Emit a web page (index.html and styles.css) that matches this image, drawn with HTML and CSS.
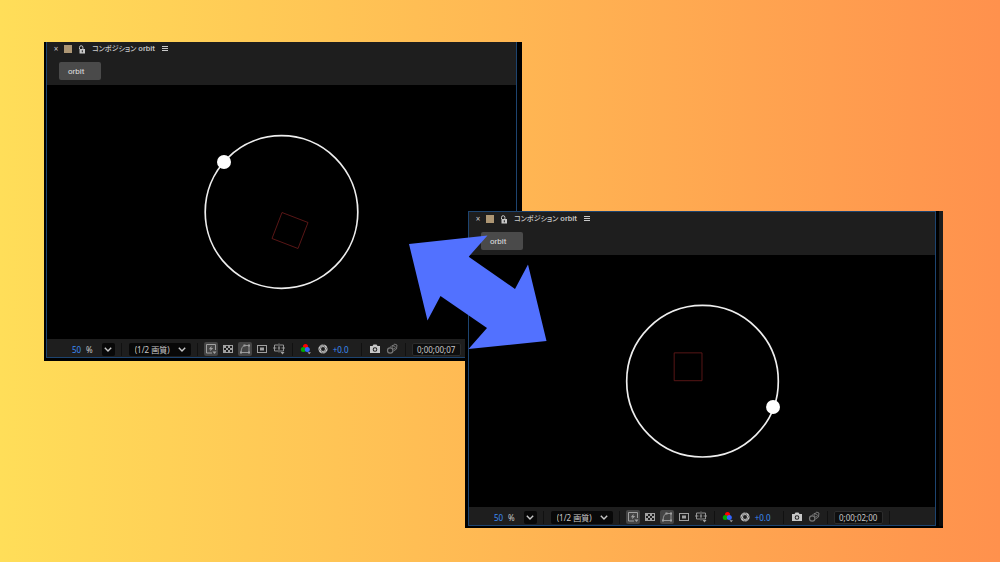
FILE: index.html
```html
<!DOCTYPE html>
<html lang="ja">
<head>
  <meta charset="UTF-8">
  <meta name="viewport" content="width=device-width, initial-scale=1.0">
  <title>orbit</title>
  <link rel="stylesheet" href="styles.css">
</head>
<body>
  <!-- Icons -->
  <svg class="icon-defs" aria-hidden="true">
    <symbol id="i-lock" viewBox="0 0 8 9">
      <path d="M1.5 4V2.400a1.700 1.700 0 0 1 3.400 0v1.600" fill="none" stroke="currentColor" stroke-width="1"/>
      <path d="M1.500 4h5.500v4.500H1.500zM3.800 5.200v2h1v-2z" fill="currentColor" fill-rule="evenodd"/>
    </symbol>
    <symbol id="i-menu" viewBox="0 0 6 6">
      <path d="M0 0h6v1H0zM0 2h6v1H0zM0 4h6v1H0z" fill="currentColor" shape-rendering="crispEdges"/>
    </symbol>
    <symbol id="i-chevron" viewBox="0 0 8 5">
      <path d="M0.8 0.8L4 4l3.2-3.2" fill="none" stroke="currentColor" stroke-width="1.4"/>
    </symbol>
    <symbol id="i-preview" viewBox="0 0 12 12">
      <path d="M10.500 7V1.500H1.500v8.500H7" fill="none" stroke="currentColor"/>
      <path d="M6.600 2.800L3.800 6.200h1.800L5 8.500l3.200-3.500H6.300z" fill="currentColor"/>
      <path d="M7.500 8.500h4L9.500 11z" fill="currentColor"/>
    </symbol>
    <symbol id="i-grid" viewBox="0 0 12 12">
      <rect x="1.500" y="2.500" width="9" height="7" fill="none" stroke="currentColor"/>
      <path d="M2 3h2v2H2zM6 3h2v2H6zM4 5h2v2H4zM8 5h2v2H8zM2 7h2v2H2zM6 7h2v2H6z" fill="currentColor"/>
    </symbol>
    <symbol id="i-mask" viewBox="0 0 12 12">
      <path d="M2 9.500C2.200 5.500 3.500 3 5.500 2.500H10v7z" fill="none" stroke="currentColor" stroke-width="0.9"/>
      <path d="M1 8.500h2v2H1zM4.500 1.500h2v2h-2zM9 1.500h2v2H9zM9 8.500h2v2H9z" fill="currentColor"/>
    </symbol>
    <symbol id="i-region" viewBox="0 0 12 12">
      <rect x="1.500" y="2.500" width="9" height="7" fill="none" stroke="currentColor"/>
      <rect x="4" y="4.500" width="4" height="3" fill="currentColor"/>
    </symbol>
    <symbol id="i-guides" viewBox="0 0 12 12">
      <path d="M5 2H1.500v6H5M7 2h3.500v6H7M6 0.500v9M0 5h3.500M4.800 5h2.400M8.500 5H12" fill="none" stroke="currentColor" stroke-width="0.9"/>
      <path d="M7.500 9h4L9.500 11.500z" fill="currentColor"/>
    </symbol>
    <symbol id="i-rgb" viewBox="0 0 12 12">
      <circle cx="5.500" cy="3.500" r="2.500" fill="#f00"/>
      <circle cx="3.300" cy="6.500" r="2.500" fill="#0a0"/>
      <circle cx="7.300" cy="6.500" r="2.500" fill="#36f"/>
      <path d="M7.500 9.200h3.500L9.200 11.300z" fill="currentColor"/>
    </symbol>
    <symbol id="i-shutter" viewBox="0 0 12 12">
      <circle cx="6" cy="6" r="3.300" fill="none" stroke="currentColor" stroke-width="2.600"/>
      <path d="M6 1L8.500 5M10.500 4L8 8M10 9H5.500M6 11L3.500 7M1.500 8L4 4M2 3h4.500" stroke="#1e1e1e" stroke-width="0.500"/>
    </symbol>
    <symbol id="i-camera" viewBox="0 0 12 12">
      <path d="M1 3h2.500l1-1.500h3l1 1.500H11v7H1zM6 4.200a2.300 2.300 0 1 0 0 4.600a2.300 2.300 0 1 0 0-4.600z" fill="currentColor" fill-rule="evenodd"/>
      <circle cx="6" cy="6.500" r="1.300" fill="currentColor"/>
    </symbol>
    <symbol id="i-snapshot" viewBox="0 0 12 12">
      <path d="M4 4.500L6 2.500l1.500 0L8.500 1l2.500 1L10.500 6 7.500 8" fill="none" stroke="currentColor"/>
      <circle cx="4.200" cy="7.500" r="2.700" fill="none" stroke="currentColor" stroke-width="1.200"/>
      <circle cx="7.800" cy="4.500" r="1.500" fill="none" stroke="currentColor"/>
    </symbol>
  </svg>

  <main class="desktop">
    <section class="window window-start">
      <div class="panel">
        <header class="panel-header">
          <div class="panel-title">
            <button class="close" aria-label="閉じる">×</button>
            <span class="swatch"></span>
            <svg class="lock"><use href="#i-lock"/></svg>
            <h2><span class="kana">コンポジション</span> orbit</h2>
            <button class="menu" aria-label="メニュー"><svg><use href="#i-menu"/></svg></button>
          </div>
          <button class="comp-tab">orbit</button>
        </header>
        <svg class="stage" viewBox="0 0 469 254">
          <circle class="orbit" cx="234.500" cy="127" r="76.300"/>
          <path class="square" d="M235 127.500l26 10-10 26-26-10z"/>
          <circle class="planet" cx="177" cy="77" r="7"/>
        </svg>
        <footer class="toolbar">
          <div class="zoom">
            <input class="zoom-value" type="text" value="50" aria-label="拡大率"><span>%</span>
            <button class="drop" aria-label="拡大率を選択"><svg class="chevron"><use href="#i-chevron"/></svg></button>
          </div>
          <div class="quality">
            <select aria-label="解像度"><option>(1/2 画質)</option></select>
            <svg class="chevron"><use href="#i-chevron"/></svg>
          </div>
          <div class="view-tools">
            <button class="tool active" aria-label="高速プレビュー"><svg><use href="#i-preview"/></svg></button>
            <button class="tool" aria-label="透明グリッド"><svg><use href="#i-grid"/></svg></button>
            <button class="tool active" aria-label="マスク"><svg><use href="#i-mask"/></svg></button>
            <button class="tool" aria-label="目標範囲"><svg><use href="#i-region"/></svg></button>
            <button class="tool" aria-label="ガイド"><svg><use href="#i-guides"/></svg></button>
          </div>
          <div class="color-tools">
            <button class="tool" aria-label="チャンネル"><svg><use href="#i-rgb"/></svg></button>
            <button class="tool bright" aria-label="露出をリセット"><svg><use href="#i-shutter"/></svg></button>
            <span class="exposure">+0.0</span>
          </div>
          <div class="snapshot-tools">
            <button class="tool bright" aria-label="スナップショット"><svg><use href="#i-camera"/></svg></button>
            <button class="tool dim" aria-label="スナップショットを表示"><svg><use href="#i-snapshot"/></svg></button>
          </div>
          <div class="time">
            <input class="timecode" type="text" value="0;00;00;07" aria-label="時間">
          </div>
        </footer>
      </div>
    </section>

    <section class="window window-end">
      <div class="panel">
        <header class="panel-header">
          <div class="panel-title">
            <button class="close" aria-label="閉じる">×</button>
            <span class="swatch"></span>
            <svg class="lock"><use href="#i-lock"/></svg>
            <h2><span class="kana">コンポジション</span> orbit</h2>
            <button class="menu" aria-label="メニュー"><svg><use href="#i-menu"/></svg></button>
          </div>
          <button class="comp-tab">orbit</button>
        </header>
        <svg class="stage" viewBox="0 0 469 254">
          <circle class="orbit" cx="235" cy="127" r="76.300"/>
          <path class="square" d="M206.500 98.500h28v28h-28z"/>
          <circle class="planet" cx="306" cy="153" r="7"/>
        </svg>
        <footer class="toolbar">
          <div class="zoom">
            <input class="zoom-value" type="text" value="50" aria-label="拡大率"><span>%</span>
            <button class="drop" aria-label="拡大率を選択"><svg class="chevron"><use href="#i-chevron"/></svg></button>
          </div>
          <div class="quality">
            <select aria-label="解像度"><option>(1/2 画質)</option></select>
            <svg class="chevron"><use href="#i-chevron"/></svg>
          </div>
          <div class="view-tools">
            <button class="tool active" aria-label="高速プレビュー"><svg><use href="#i-preview"/></svg></button>
            <button class="tool" aria-label="透明グリッド"><svg><use href="#i-grid"/></svg></button>
            <button class="tool active" aria-label="マスク"><svg><use href="#i-mask"/></svg></button>
            <button class="tool" aria-label="目標範囲"><svg><use href="#i-region"/></svg></button>
            <button class="tool" aria-label="ガイド"><svg><use href="#i-guides"/></svg></button>
          </div>
          <div class="color-tools">
            <button class="tool" aria-label="チャンネル"><svg><use href="#i-rgb"/></svg></button>
            <button class="tool bright" aria-label="露出をリセット"><svg><use href="#i-shutter"/></svg></button>
            <span class="exposure">+0.0</span>
          </div>
          <div class="snapshot-tools">
            <button class="tool bright" aria-label="スナップショット"><svg><use href="#i-camera"/></svg></button>
            <button class="tool dim" aria-label="スナップショットを表示"><svg><use href="#i-snapshot"/></svg></button>
          </div>
          <div class="time">
            <input class="timecode" type="text" value="0;00;02;00" aria-label="時間">
          </div>
        </footer>
      </div>
      <div class="side"></div>
    </section>

    <svg class="arrow" viewBox="0 0 138 114" aria-hidden="true">
      <path d="M0 9L78.500 0.500 59.700 21.700 106 54 119 29.500 137.500 106 59.500 114 78 93 31.500 61 18.500 85.500z"/>
    </svg>
  </main>
</body>
</html>
```
FILE: styles.css
```css
* {
  box-sizing: border-box;
}

body {
  margin: 0;
  font-family: "Noto Sans", "Noto Sans CJK JP", sans-serif;
  font-size: 8px;
  color: #c8c8c8;
}

button,
input,
select {
  margin: 0;
  padding: 0;
  border: none;
  background: none;
  color: inherit;
  font: inherit;
}

svg {
  display: block;
}

.icon-defs {
  position: absolute;
  width: 0;
  height: 0;
}

.desktop {
  position: relative;
  min-height: 100vh;
  overflow: hidden;
  background: linear-gradient(90deg, #ffde59, #ff914d);
}

/* Windows */
.window {
  position: absolute;
  display: flex;
  width: 47.8%;
  background: #000;
}

.window-start {
  left: 4.4%;
  top: 42px;
  padding: 0 5px 3px 2px;
}

.window-end {
  left: 46.5%;
  top: 211px;
  padding: 0 0 2px 3px;
}

.panel {
  flex: 1;
  min-width: 0;
  border: 1px solid #1d4470;
}

.window-start .panel {
  border-top: none;
}

.side {
  width: 4px;
  margin-left: 3px;
  background: linear-gradient(#1c1c1c 79px, #0c0c0c 79px);
}

.panel-header {
  height: 43px;
  padding-left: 6px;
  background: #1e1e1e;
}

.panel-title {
  display: flex;
  align-items: center;
  height: 14px;
}

.close {
  width: 6px;
  line-height: 12px;
}

.swatch {
  width: 8px;
  height: 8px;
  margin-left: 5px;
  background: #ad9674;
}

.lock {
  width: 8px;
  height: 9px;
  margin-left: 6px;
}

.panel-title h2 {
  margin: 0 0 0 6px;
  font-family: Roboto, "Noto Sans CJK JP", sans-serif;
  font-size: 8px;
  line-height: 14px;
  font-weight: 500;
  white-space: nowrap;
}

.panel-title .kana {
  font-size: 7px;
  font-feature-settings: "palt";
}

.menu {
  margin-left: 7px;
}

.menu svg {
  width: 6px;
  height: 6px;
}

.comp-tab {
  display: block;
  width: 42px;
  height: 18px;
  margin: 6px 0 0 6px;
  padding-left: 9px;
  border-radius: 2px;
  background: #4a4a4a;
  color: #e0e0e0;
  font-family: Roboto, sans-serif;
  text-align: left;
}

/* Stage */
.stage {
  width: 100%;
  height: auto;
  background: #000;
}

.orbit {
  fill: none;
  stroke: #eee;
  stroke-width: 1.7;
}

.planet {
  fill: #fff;
}

.square {
  fill: none;
  stroke: #6e1c1c;
  stroke-width: 0.8;
}

/* Toolbar */
.toolbar {
  display: flex;
  align-items: center;
  height: 18px;
  padding: 2px 0 0 25px;
  background: #1e1e1e;
}

.toolbar > div {
  display: flex;
  align-items: center;
  height: 13px;
  padding-right: 6px;
  border-right: 1px solid #111;
}

.zoom-value {
  width: 14px;
  color: #3b8cf5;
}

.drop {
  display: flex;
  align-items: center;
  justify-content: center;
  width: 13px;
  height: 13px;
  margin-left: 9px;
  border-radius: 2px;
  background: #080808;
}

.chevron {
  width: 8px;
  height: 5px;
}

.quality {
  position: relative;
  padding-left: 7px;
}

.quality select {
  width: 62px;
  height: 13px;
  padding-left: 6px;
  border-radius: 2px;
  background: #080808;
  appearance: none;
}

.quality .chevron {
  position: absolute;
  right: 11px;
  top: 4px;
  pointer-events: none;
}

.view-tools {
  gap: 3px;
  padding-left: 6px;
}

.tool {
  display: flex;
  align-items: center;
  justify-content: center;
  width: 14px;
  height: 14px;
  border-radius: 2px;
  color: #a0a0a0;
}

.tool svg {
  width: 12px;
  height: 12px;
}

.tool.active {
  background: #444;
}

.tool.bright {
  color: #c8c8c8;
}

.tool.dim {
  color: #777;
}

.color-tools {
  gap: 3px;
  padding-left: 6px;
}

.exposure {
  width: 22px;
  color: #3b8cf5;
}

.snapshot-tools {
  gap: 3px;
  padding-left: 6px;
}

.time {
  padding-left: 6px;
}

.timecode {
  width: 49px;
  height: 13px;
  border: 1px solid #2c2c2c;
  border-radius: 2px;
  background: #0e0e0e;
  text-align: center;
}

/* Arrow between the two frames */
.arrow {
  position: absolute;
  left: 40.9%;
  top: 235px;
  width: 13.8%;
  fill: #5271ff;
}
```
